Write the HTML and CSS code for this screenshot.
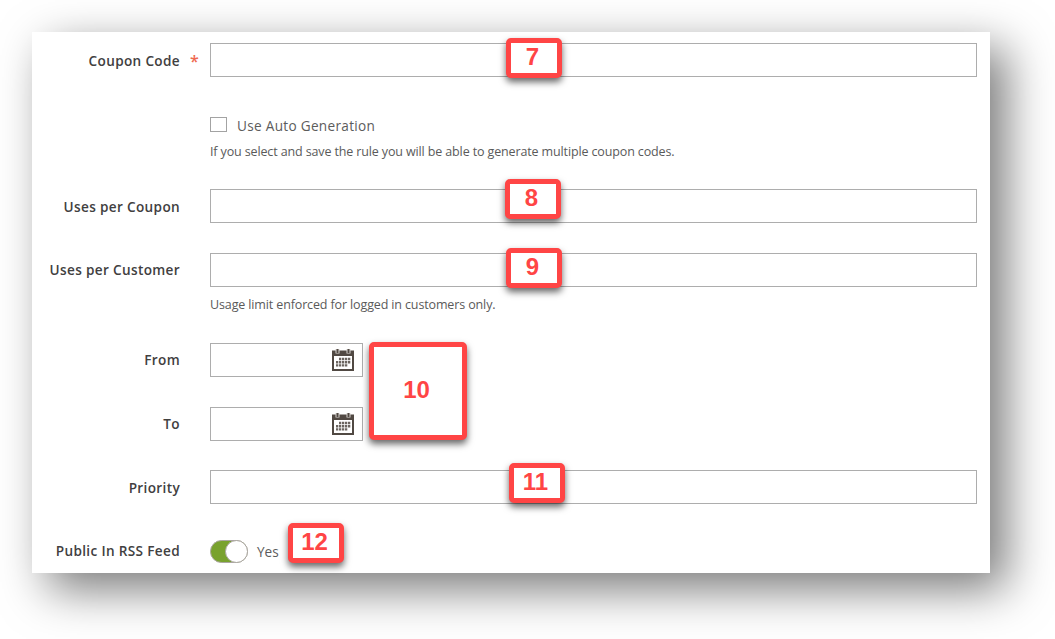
FILE: index.html
```html
<!DOCTYPE html>
<html lang="en">
<head>
<meta charset="utf-8">
<title>Coupon settings</title>
<link rel="stylesheet" href="styles.css">
</head>
<body>
<svg class="symbols" aria-hidden="true">
  <symbol id="calendar" viewBox="0 0 22 22">
    <path fill="#514943" fill-rule="evenodd" d="M0 1.500h22v20.500H0zM2 7v13h18V7z"/>
    <path fill="#d9d5d1" d="M3.500 0h4v4.500h-4zM14.500 0h4v4.500h-4z"/>
    <path fill="#514943" d="M4.500 0h2v4h-2zM15.500 0h2v4h-2z"/>
    <path stroke="#6b645f" stroke-width="2.400" stroke-dasharray="2.300 .7" fill="none" d="M7 10h11.300M4 13.200h14.300M4 16.400h11.300"/>
  </symbol>
</svg>
<form class="panel">
  <div class="row row-code">
    <label class="label required" for="code">Coupon Code</label>
    <div class="control"><input class="input" id="code" type="text"></div>
  </div>
  <div class="row row-auto">
    <span class="label"></span>
    <div class="control">
      <label class="check"><input class="checkbox" type="checkbox"><span class="check-text">Use Auto Generation</span></label>
      <p class="note note-auto">If you select and save the rule you will be able to generate multiple coupon codes.</p>
    </div>
  </div>
  <div class="row row-coupon">
    <label class="label" for="per-coupon">Uses per Coupon</label>
    <div class="control"><input class="input" id="per-coupon" type="text"></div>
  </div>
  <div class="row row-customer">
    <label class="label" for="per-customer">Uses per Customer</label>
    <div class="control">
      <input class="input" id="per-customer" type="text">
      <p class="note">Usage limit enforced for logged in customers only.</p>
    </div>
  </div>
  <div class="row row-date">
    <span class="label">From</span>
    <div class="control"><div class="date"><svg class="calendar"><use href="#calendar"/></svg></div></div>
  </div>
  <div class="row row-date">
    <span class="label">To</span>
    <div class="control"><div class="date"><svg class="calendar"><use href="#calendar"/></svg></div></div>
  </div>
  <div class="row row-priority">
    <label class="label" for="priority">Priority</label>
    <div class="control"><input class="input" id="priority" type="text"></div>
  </div>
  <div class="row row-rss">
    <span class="label">Public In RSS Feed</span>
    <div class="control switch"><span class="track"><span class="knob"></span></span><span class="state">Yes</span></div>
  </div>
  <span class="callout c7">7</span>
  <span class="callout c8">8</span>
  <span class="callout c9">9</span>
  <span class="callout c10">10</span>
  <span class="callout c11">11</span>
  <span class="callout c12">12</span>
</form>
</body>
</html>
```
FILE: styles.css
```css
* { box-sizing: border-box; }
body {
  margin: 0;
  padding: 32px;
  height: 639px;
  overflow: hidden;
  background: #fff;
  color: #41403f;
  font-family: "Open Sans", sans-serif;
}
.symbols { display: none; }
.panel {
  position: relative;
  width: 958px;
  height: 541px;
  padding: 11px 13px 0 0;
  background: #fff;
  box-shadow: 16px 16px 44px rgba(0, 0, 0, .53);
}
.row { display: flex; align-items: flex-start; }
.label {
  width: 148px;
  margin-right: 30px;
  line-height: 34px;
  font-size: 13.6px;
  font-weight: 600;
  letter-spacing: .34px;
  text-align: right;
  white-space: nowrap;
}
.row-code .label,
.row-coupon .label,
.row-priority .label { line-height: 36px; }
.required::after {
  content: "*";
  float: right;
  width: 9px;
  margin-right: -19px;
  color: #ef6950;
  font-size: 16px;
  text-align: left;
}
.control { flex: 1; }
.input {
  display: block;
  width: 100%;
  height: 34px;
  margin: 0;
  border: 1px solid #adadad;
  border-radius: 0;
  background: #fff;
}
.row-code { height: 65px; }
.row-auto { height: 81px; }
.row-coupon { height: 64px; }
.row-customer { height: 90px; }
.row-date { height: 64px; }
.row-priority { height: 64px; margin-top: -1px; }
.check { display: flex; align-items: center; height: 34px; }
.checkbox {
  appearance: none;
  width: 17px;
  height: 15px;
  margin: -1px 10px 0 0;
  border: 1px solid #a3a3a3;
  background: #fff;
}
.check-text {
  padding-top: 2px;
  font-size: 13.6px;
  line-height: 34px;
  letter-spacing: .3px;
  color: #5c5c5c;
}
.note {
  margin: 9px 0 0;
  line-height: 18px;
  font-size: 12.5px;
  letter-spacing: -.13px;
  color: #5a5a5a;
  white-space: nowrap;
}
.note-auto { margin-top: 1px; }
.date {
  display: flex;
  align-items: center;
  justify-content: flex-end;
  width: 153px;
  height: 34px;
  padding-right: 8px;
  border: 1px solid #adadad;
}
.calendar { width: 22px; height: 22px; }
.switch { display: flex; align-items: center; height: 34px; }
.track {
  display: flex;
  justify-content: flex-end;
  width: 38px;
  height: 23px;
  border: 1px solid #aaa6a0;
  border-radius: 12px;
  background: #79a22e;
}
.knob {
  width: 23px;
  height: 23px;
  margin: -1px;
  border: 1px solid #aaa6a0;
  border-radius: 50%;
  background: #fff;
}
.state { margin-left: 9px; font-size: 13.6px; color: #5c5c5c; }
.callout {
  position: absolute;
  display: flex;
  align-items: center;
  justify-content: center;
  width: 56px;
  height: 40px;
  padding: 0 3px 2px 0;
  border: 5px solid #ff4545;
  border-radius: 5px;
  background: #fff;
  box-shadow: 0 4px 7px rgba(0, 0, 0, .6);
  color: #ff4545;
  font: bold 24px/28px "Liberation Sans", sans-serif;
}
.c7 { left: 474px; top: 6px; }
.c8 { left: 473px; top: 147px; }
.c9 { left: 474px; top: 216px; }
.c10 { left: 337px; top: 310px; width: 98px; height: 98px; }
.c11 { left: 477px; top: 431px; }
.c12 { left: 256px; top: 491px; }
```
